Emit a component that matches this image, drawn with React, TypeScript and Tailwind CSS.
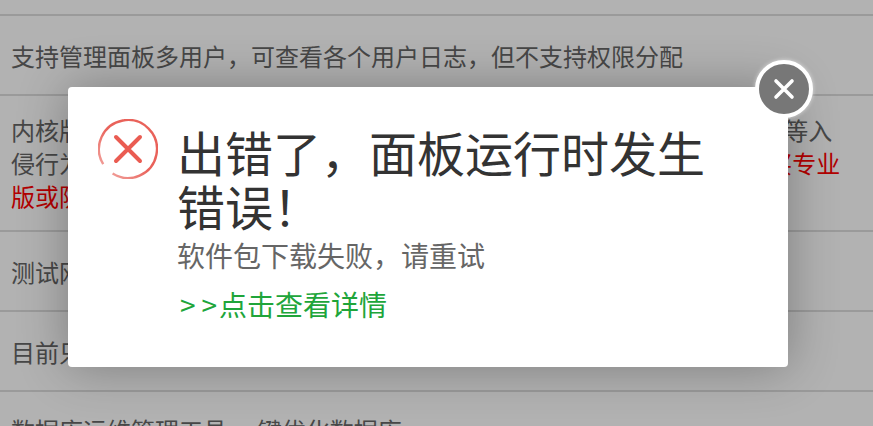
const font = 'font-["Noto_Sans_CJK_SC","Noto_Sans",sans-serif]';

function ErrorIcon() {
  return (
    <svg viewBox="0 0 60 60" className="h-[60px] w-[60px] shrink-0 blur-[0.4px]">
      <defs>
        <linearGradient id="ring" x1="1" y1="0" x2="0" y2="1">
          <stop offset="0.5" stopColor="#e9625a" />
          <stop offset="1" stopColor="#f3b0ab" />
        </linearGradient>
      </defs>
      <path
        d="M14.6 54.6 A29 29 0 1 0 5.2 45.1"
        fill="none"
        stroke="url(#ring)"
        strokeWidth="2.4"
      />
      <path
        d="M18 18 L42 42 M42 18 L18 42"
        fill="none"
        stroke="#ea5c52"
        strokeWidth="4"
        strokeLinecap="round"
      />
    </svg>
  );
}

function Row({ children, h }: { children: React.ReactNode; h: string }) {
  return <div className={`border-b-2 border-[#ddd] px-[11px] ${h}`}>{children}</div>;
}

export default function App() {
  return (
    <div className={`relative h-[426px] w-[873px] overflow-hidden bg-white text-[24px] leading-[33px] text-[#666] ${font}`}>
      <div className="h-[426px] overflow-hidden">
        <div className="h-[16px] border-b-2 border-[#ddd]" />
        <Row h="flex h-[80px] items-center">
          支持管理面板多用户，可查看各个用户日志，但不支持权限分配
        </Row>
        <Row h="h-[136px] pt-[17px]">
          <p className="whitespace-nowrap">内核版 采用全新安全防护引擎，可以有效拦截各类常见的攻击与恶意扫描等入</p>
          <p className="whitespace-nowrap">
            侵行为，全面保障服务器安全运行，如需更多高级7层防护功能
            <span className="text-[#f00]">请升级购买专业</span>
          </p>
          <p className="text-[#f00]">版或防护套餐</p>
        </Row>
        <Row h="flex h-[80px] items-center">测试网站运行状态</Row>
        <Row h="flex h-[80px] items-center">目前只支持部分功能</Row>
        <div className="flex h-[70px] items-start px-[11px] pt-[21px]">数据库运维管理工具,一键优化数据库</div>
      </div>

      <div className="absolute inset-0 bg-black/30" />

      <div className="absolute left-[68px] top-[87px] flex h-[280px] w-[720px] gap-[19px] rounded-[4px] bg-white pl-[30px] pr-[80px] pt-[32px] shadow-[0_0_50px_rgba(0,0,0,0.3)]">
        <ErrorIcon />
        <div className="pt-[5px]">
          <h1 className="text-[48px] font-normal leading-[54px] text-[#333]">出错了，面板运行时发生错误！</h1>
          <p className="text-[28px] leading-[46px] text-[#666]">软件包下载失败，请重试</p>
          <a className="block text-[28px] leading-[52px] text-[#20a53a]">
            <span className="-mr-[4px] ml-[3px] tracking-[6px]">&gt;&gt;</span>点击查看详情
          </a>
        </div>
      </div>

      <button className="absolute left-[755px] top-[60px] flex h-[58px] w-[58px] items-center justify-center rounded-full border-[4px] border-white bg-[#777] shadow-[0_0_4px_rgba(255,255,255,0.6)]">
        <svg viewBox="0 0 24 24" className="h-[24px] w-[24px] blur-[0.3px]">
          <path d="M4 4 L20 20 M20 4 L4 20" fill="none" stroke="white" strokeWidth="3.6" strokeLinecap="round" />
        </svg>
      </button>
    </div>
  );
}
